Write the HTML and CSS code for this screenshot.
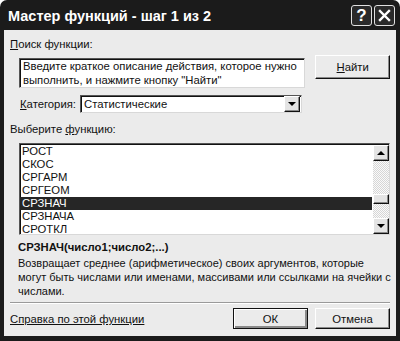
FILE: index.html
```html
<!DOCTYPE html>
<html lang="ru">
<head>
    <meta charset="UTF-8">
    <title>Мастер функций - шаг 1 из 2</title>
    <link rel="stylesheet" href="styles.css">
</head>
<body>
    <div class="window">
        <div class="titlebar">
            <span class="title">Мастер функций - шаг 1 из 2</span>
            <span class="tb-btn help">?</span>
            <span class="tb-btn close">
                <svg width="13" height="13" viewBox="0 0 13 13">
                    <path d="M2 2 L11 11 M11 2 L2 11" stroke="#fff" stroke-width="2.4" stroke-linecap="square"/>
                </svg>
            </span>
        </div>
        <div class="client">
            <div class="label"><u>П</u>оиск функции:</div>
            <div class="search-row">
                <div class="field search-text">Введите краткое описание действия, которое нужно выполнить, и нажмите кнопку "Найти"</div>
                <div class="button find"><u>Н</u>айти</div>
            </div>
            <div class="category-row">
                <span class="cat-label"><u>К</u>атегория:</span>
                <div class="field select">
                    <span class="select-value">Статистические</span>
                    <span class="small-btn drop"><span class="arrow down"></span></span>
                </div>
            </div>
            <div class="label list-label">Выберите <u>ф</u>ункцию:</div>
            <div class="field listbox">
                <ul class="items">
                    <li>РОСТ</li>
                    <li>СКОС</li>
                    <li>СРГАРМ</li>
                    <li>СРГЕОМ</li>
                    <li class="selected">СРЗНАЧ</li>
                    <li>СРЗНАЧА</li>
                    <li>СРОТКЛ</li>
                </ul>
                <div class="scrollbar">
                    <span class="small-btn"><span class="arrow up"></span></span>
                    <div class="track"><span class="thumb"></span></div>
                    <span class="small-btn"><span class="arrow down"></span></span>
                </div>
            </div>
            <div class="signature">СРЗНАЧ(число1;число2;...)</div>
            <div class="description">Возвращает среднее (арифметическое) своих аргументов, которые<br>могут быть числами или именами, массивами или ссылками на ячейки с<br>числами.</div>
            <div class="separator"></div>
            <div class="bottom-row">
                <span class="help-link">Справка по этой функции</span>
                <div class="button default">ОК</div>
                <div class="button">Отмена</div>
            </div>
        </div>
    </div>
</body>
</html>
```

FILE: styles.css
```css
body {
    margin: 0;
    background-color: #fff;
    font-family: "Liberation Sans", Arial, sans-serif;
    font-size: 11.3px;
    color: #111;
}
.window {
    width: 400px;
    height: 341px;
    background-color: #1b1b1b;
    border-radius: 7px 7px 0 0;
    display: flex;
    flex-direction: column;
}
.titlebar {
    height: 30px;
    display: flex;
    align-items: center;
    padding: 0 5px 0 8px;
    color: #fff;
}
.title {
    flex: 1;
    font-weight: bold;
    font-size: 14.5px;
    padding-top: 2px;
}
.tb-btn {
    width: 19px;
    height: 19px;
    border: 1px solid #e0e0e0;
    border-radius: 3px;
    background-color: #2a2a2a;
    display: flex;
    align-items: center;
    justify-content: center;
    font-weight: bold;
    font-size: 17px;
    margin-left: 2px;
    margin-top: 1px;
}
.client {
    flex: 1;
    background-color: #ebebeb;
    margin: 0 4px 5px 4px;
    padding: 7px 6px 0 6px;
}
.label {
    line-height: 14px;
}
.search-row {
    display: flex;
    align-items: flex-start;
    margin-top: 4px;
}
.field {
    background-color: #fff;
    border: 1px solid;
    border-color: #555 #d8d8d8 #d8d8d8 #555;
    box-shadow: inset 1px 1px #111;
}
.search-text {
    width: 283px;
    height: 28px;
    margin: 3px 0 0 9px;
    padding: 0 0 0 3px;
    line-height: 14px;
    overflow: hidden;
}
.button {
    height: 19px;
    border: 1px solid;
    border-color: #fff #111 #111 #fff;
    box-shadow: inset -1px -1px #8a8a8a;
    background-color: #ebebeb;
    display: flex;
    align-items: center;
    justify-content: center;
    width: 73px;
}
.find {
    height: 22px;
    margin-left: 10px;
}
.category-row {
    display: flex;
    align-items: center;
    margin-top: 7px;
}
.cat-label {
    width: 60px;
    margin-left: 10px;
}
.select {
    width: 220px;
    height: 16px;
    display: flex;
    align-items: center;
}
.select-value {
    flex: 1;
    padding-left: 3px;
}
.small-btn {
    width: 14px;
    height: 14px;
    border: 1px solid;
    border-color: #fff #111 #111 #fff;
    box-shadow: inset -1px -1px #8a8a8a;
    background-color: #e4e4e4;
    display: flex;
    align-items: center;
    justify-content: center;
}
.drop {
    margin-right: 1px;
}
.arrow {
    width: 0;
    height: 0;
    border-left: 4px solid transparent;
    border-right: 4px solid transparent;
}
.arrow.down {
    border-top: 4px solid #000;
}
.arrow.up {
    border-bottom: 4px solid #000;
}
.list-label {
    margin-top: 9px;
}
.listbox {
    margin: 7px 0 0 9px;
    width: 369px;
    height: 90px;
    display: flex;
    overflow: hidden;
}
.items {
    list-style: none;
    margin: 0;
    padding: 1px 0 0 0;
    flex: 1;
}
.items li {
    height: 13px;
    line-height: 13px;
    padding-left: 2px;
    margin-right: 1px;
}
.items li.selected {
    background-color: #262626;
    color: #fff;
}
.scrollbar {
    width: 16px;
    display: flex;
    flex-direction: column;
    padding-top: 1px;
}
.track {
    flex: 1;
    background: repeating-conic-gradient(#fafafa 0 25%, #d6d6d6 0 50%) 0 0 / 2px 2px;
    padding-top: 33px;
}
.thumb {
    display: block;
    height: 8px;
    border: 1px solid;
    border-color: #fff #111 #111 #fff;
    box-shadow: inset -1px -1px #8a8a8a;
    background-color: #e4e4e4;
}
.signature {
    font-weight: bold;
    line-height: 14px;
    margin: 5px 0 0 8px;
}
.description {
    font-size: 11px;
    line-height: 14px;
    margin: 2px 0 0 8px;
    white-space: nowrap;
}
.separator {
    margin-top: 4px;
    border-top: 1px solid #9a9a9a;
    border-bottom: 1px solid #fff;
    height: 0;
}
.bottom-row {
    display: flex;
    align-items: center;
    margin-top: 4px;
    gap: 7px;
}
.help-link {
    flex: 1;
    text-decoration: underline;
    padding-top: 1px;
}
.button.default {
    border-color: #111;
    box-shadow: inset 1px 1px #fff, inset -2px -2px #8a8a8a;
}
```
